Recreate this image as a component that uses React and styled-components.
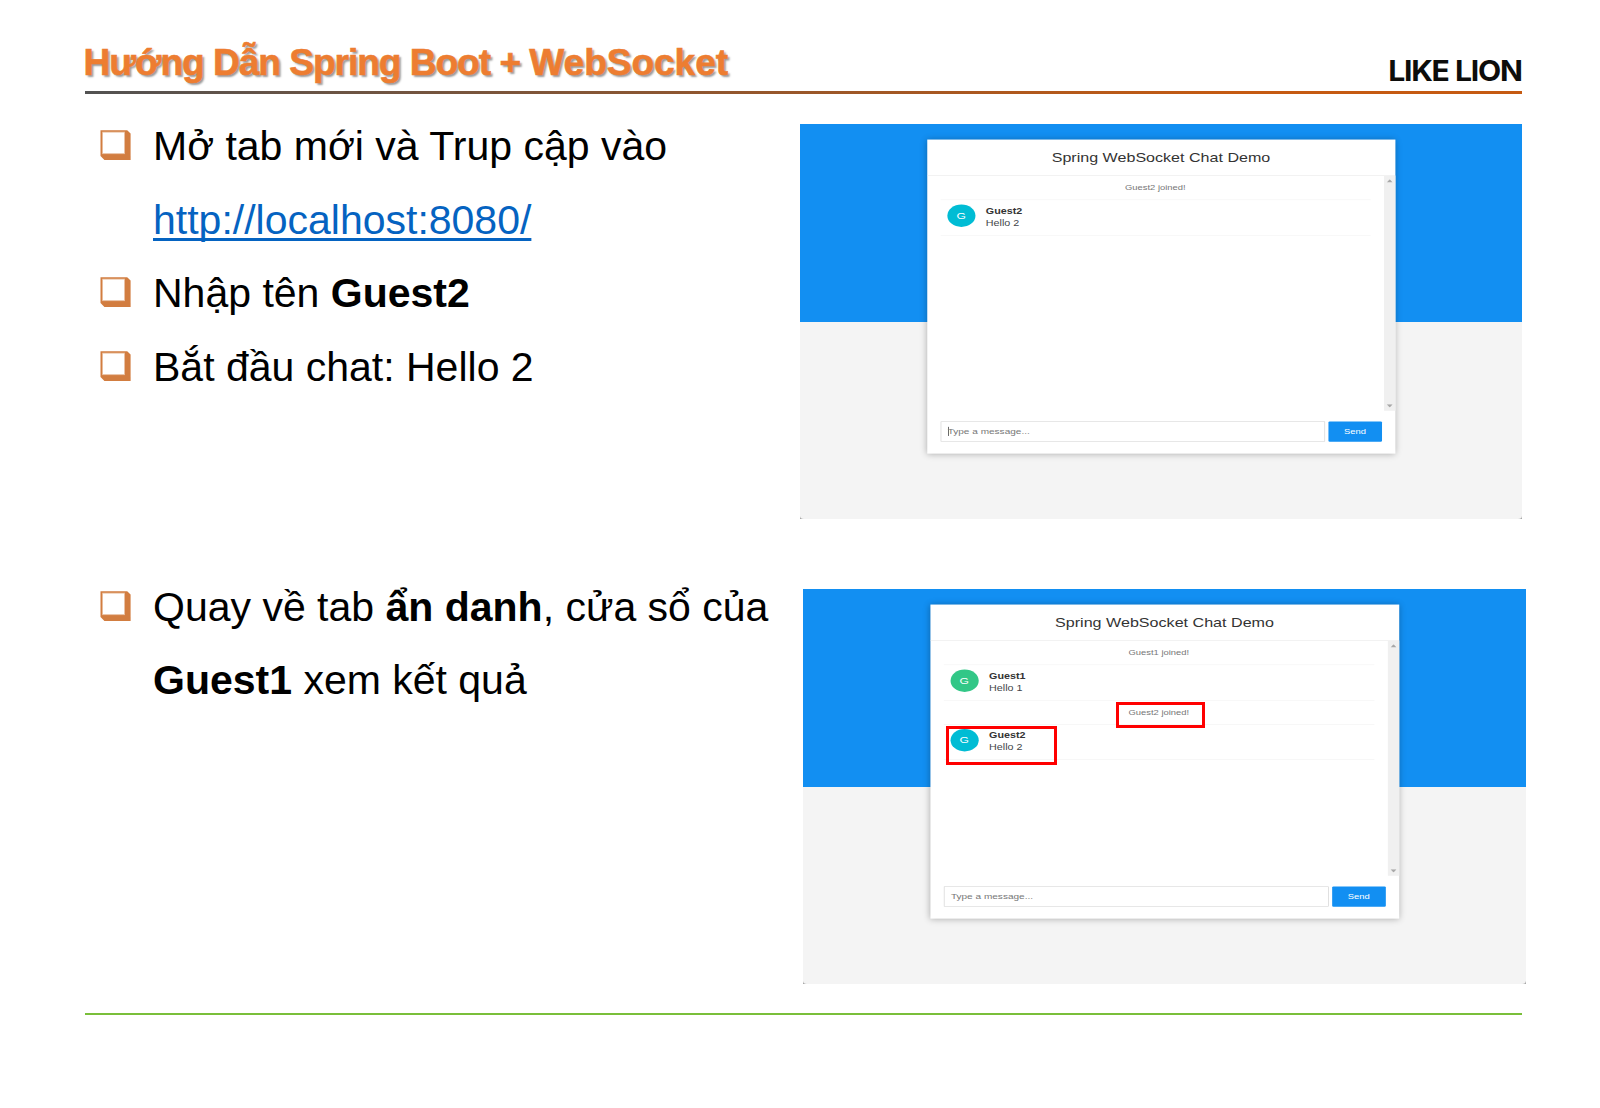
import React from "react";
import styled, { createGlobalStyle } from "styled-components";

const GlobalStyle = createGlobalStyle`
  * { box-sizing: border-box; }
  body {
    margin: 0;
    background: #fff;
    font-family: "Liberation Sans", Arial, sans-serif;
    -webkit-font-smoothing: antialiased;
  }
`;

const Slide = styled.div`
  width: 1600px;
  height: 1108px;
  padding: 0 74px 0 85px;
  overflow: hidden;
  background: #fff;
`;

const Header = styled.header`
  display: flex;
  justify-content: space-between;
  align-items: flex-start;
  width: 1437px;
  height: 91px;
`;

const Title = styled.h1`
  margin: 0;
  padding-top: 42px;
  margin-left: -1.5px;
  font-size: 37px;
  line-height: 41px;
  font-weight: 700;
  color: #ed7d31;
  -webkit-text-stroke: 0.6px #ed7d31;
  text-shadow: 2px 2px 2px rgba(0, 0, 0, 0.4);
  white-space: nowrap;
`;

const Tight = styled.span`
  letter-spacing: -0.98px;
`;

const Logo = styled.div`
  padding-top: 52.5px;
  font-family: Inter, "Liberation Sans", sans-serif;
  font-size: 28.8px;
  line-height: 36px;
  font-weight: 700;
  letter-spacing: -1.2px;
  word-spacing: 0.5px;
  transform: scaleX(1.045);
  transform-origin: 100% 0;
  color: #0d0d0b;
  white-space: nowrap;
`;

const HeaderRule = styled.div`
  width: 1437px;
  height: 3px;
  background: linear-gradient(90deg, #525252 0%, #c55a11 80%, #c55a11 100%);
`;

const FooterRule = styled.div`
  width: 1437px;
  height: 2px;
  background: #7abf3a;
`;

const Section = styled.section`
  display: grid;
  grid-template-columns: ${(p) => p.$left}px auto;
  justify-content: start;
  height: ${(p) => p.$height}px;
`;

const Figure = styled.div`
  padding-top: ${(p) => p.$top}px;
`;

const List = styled.ul`
  margin: 0;
  padding: ${(p) => p.$top}px 0 0 15px;
  list-style: none;
`;

const Item = styled.li`
  display: flex;
  gap: 22px;
  font-size: 41px;
  line-height: ${(p) => p.$pitch || 73.6}px;
  color: #000;
  white-space: nowrap;
`;

const BulletIcon = styled.svg`
  flex: none;
  width: 31px;
  height: 31px;
  margin-top: 20px;
`;

const Link = styled.a`
  color: #0563c1;
  text-decoration: underline;
  text-decoration-thickness: 3px;
  text-underline-offset: 4px;
  text-decoration-skip-ink: none;
`;

/* The demo window is laid out at its native size, then squeezed into its frame. */
const Frame = styled.div`
  position: relative;
  width: ${(p) => p.$width}px;
  height: 395px;
  background: linear-gradient(#fff 50%, #a8a8a8 50%);
`;

const Screen = styled.div`
  width: 1078px;
  height: 737px;
  padding: 28.5px 0 0 0;
  transform: scale(${(p) => p.$width / 1078}, 0.536);
  transform-origin: 0 0;
  background: linear-gradient(#128ff2 0 368.5px, #f4f4f4 368.5px);
  border-radius: 0 0 6px 6px;
`;

const Card = styled.div`
  display: flex;
  flex-direction: column;
  width: 699px;
  height: 586px;
  margin: 0 auto;
  background: #fff;
  box-shadow: 0 1px 11px rgba(0, 0, 0, 0.3);
`;

const CardHeader = styled.div`
  height: 68px;
  border-bottom: 1.5px solid #e6e6e6;
  text-align: center;
  font-size: 24px;
  line-height: 66px;
  color: #333;
`;

const Messages = styled.div`
  display: flex;
  height: 438.5px;
`;

const Feed = styled.div`
  flex: 1;
  padding: 0 20px;
`;

const EventRow = styled.div`
  height: 45px;
  border-bottom: 1px solid #f1f1f1;
  text-align: center;
  font-size: 14px;
  line-height: 44px;
  color: #777;
`;

const ChatRow = styled.div`
  display: flex;
  gap: 16px;
  height: 66px;
  padding: 8.5px 10px 0;
  border-bottom: 1px solid #f1f1f1;
`;

const Avatar = styled.div`
  width: 42px;
  height: 42px;
  border-radius: 50%;
  background: ${(p) => p.$color};
  color: #fff;
  font-size: 18px;
  line-height: 42px;
  text-align: center;
`;

const Bubble = styled.div`
  font-size: 16px;
  line-height: 23px;
  color: #43464b;
`;

const Sender = styled.div`
  font-weight: 700;
  color: #333;
`;

const Scrollbar = styled.div`
  display: flex;
  flex-direction: column;
  justify-content: space-between;
  align-items: center;
  width: 17px;
  padding: 6px 0;
  background: #f0f0f0;
`;

const Arrow = styled.svg`
  width: 9px;
  height: 6px;
  transform: rotate(${(p) => (p.$down ? 180 : 0)}deg);
`;

const Composer = styled.div`
  display: flex;
  gap: 5px;
  padding: 20px 20px 0;
`;

const Field = styled.div`
  display: flex;
  align-items: center;
  width: 574.5px;
  height: 38px;
  padding: 0 0 2px 10px;
  border: 1.5px solid #d2d2d2;
  font-size: 15px;
  color: #777;
`;

const Caret = styled.span`
  width: 1.4px;
  height: 17px;
  margin-right: -1.4px;
  background: #222;
`;

const Send = styled.div`
  width: 79.5px;
  height: 38px;
  border-radius: 2px;
  background: #128ff2;
  color: #fff;
  font-size: 14px;
  line-height: 37px;
  text-align: center;
`;

const Highlight = styled.div`
  position: absolute;
  left: ${(p) => p.$x}px;
  top: ${(p) => p.$y}px;
  width: ${(p) => p.$w}px;
  height: ${(p) => p.$h}px;
  border: 3px solid #ff0000;
`;

const Bullet = () => (
  <BulletIcon viewBox="0 0 31 31">
    <path d="M0.5 0.2H27.2L30.6 3.6V30H4.4L0.5 26Z" fill="#d27d40" />
    <rect x="2.6" y="2.1" width="22" height="21.6" fill="#fff" stroke="#e9bfa0" strokeWidth="0.8" />
  </BulletIcon>
);

const Triangle = ({ down }) => (
  <Arrow viewBox="0 0 9 6" $down={down}>
    <path d="M4.5 0L9 6H0Z" fill="#a8a8a8" />
  </Arrow>
);

function ChatDemo({ width, rows, caret, children }) {
  return (
    <Frame $width={width}>
      <Screen $width={width}>
        <Card>
          <CardHeader>Spring WebSocket Chat Demo</CardHeader>
          <Messages>
            <Feed>
              {rows.map((row, i) =>
                row.event ? (
                  <EventRow key={i}>{row.event}</EventRow>
                ) : (
                  <ChatRow key={i}>
                    <Avatar $color={row.color}>G</Avatar>
                    <Bubble>
                      <Sender>{row.sender}</Sender>
                      {row.text}
                    </Bubble>
                  </ChatRow>
                )
              )}
            </Feed>
            <Scrollbar>
              <Triangle />
              <Triangle down />
            </Scrollbar>
          </Messages>
          <Composer>
            <Field>
              {caret && <Caret />}
              Type a message...
            </Field>
            <Send>Send</Send>
          </Composer>
        </Card>
      </Screen>
      {children}
    </Frame>
  );
}

const guest1 = { sender: "Guest1", text: "Hello 1", color: "#32c787" };
const guest2 = { sender: "Guest2", text: "Hello 2", color: "#00bcd4" };

export default function App() {
  return (
    <Slide>
      <GlobalStyle />
      <Header>
        <Title>
          <Tight>Hướng Dẫn Spring Boot + </Tight>WebSocket
        </Title>
        <Logo>LIKE LION</Logo>
      </Header>
      <HeaderRule />
      <Section $left={715} $height={476}>
        <List $top={16}>
          <Item>
            <Bullet />
            <div>
              Mở tab mới và Trup cập vào
              <br />
              <Link>http://localhost:8080/</Link>
            </div>
          </Item>
          <Item>
            <Bullet />
            <div>
              Nhập tên <b>Guest2</b>
            </div>
          </Item>
          <Item>
            <Bullet />
            <div>Bắt đầu chat: Hello 2</div>
          </Item>
        </List>
        <Figure $top={30}>
          <ChatDemo width={722} caret rows={[{ event: "Guest2 joined!" }, guest2]} />
        </Figure>
      </Section>
      <Section $left={718} $height={443}>
        <List $top={1}>
          <Item $pitch={73}>
            <Bullet />
            <div>
              Quay về tab <b>ẩn danh</b>, cửa sổ của
              <br />
              <b>Guest1</b> xem kết quả
            </div>
          </Item>
        </List>
        <Figure $top={19}>
          <ChatDemo
            width={723}
            rows={[{ event: "Guest1 joined!" }, guest1, { event: "Guest2 joined!" }, guest2]}
          >
            <Highlight $x={312.5} $y={113} $w={89} $h={26} />
            <Highlight $x={143} $y={137} $w={111} $h={39} />
          </ChatDemo>
        </Figure>
      </Section>
      <FooterRule />
    </Slide>
  );
}
